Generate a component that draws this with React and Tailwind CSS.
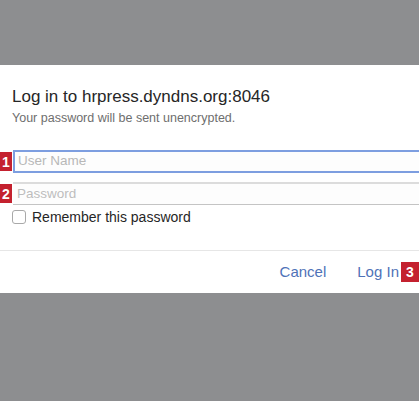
import React from "react";

function Badge({ n }) {
  return (
    <span className="flex h-[19px] w-[12px] shrink-0 items-center justify-center bg-[#c4212f] text-[14px] font-bold leading-none text-white">
      {n}
    </span>
  );
}

export default function App() {
  return (
    <div
      className="h-[401px] w-[419px] overflow-hidden bg-[#8d8e90] pt-[65px]"
      style={{ fontFamily: '"Liberation Sans", Arial, sans-serif' }}
    >
      <div className="flex h-[228px] flex-col bg-white">
        {/* header text */}
        <div className="pl-[12px] pt-[23px]">
          <h1 className="text-[17px] leading-[18px] text-[#262626]">
            Log in to hrpress.dyndns.org:8046
          </h1>
          <p className="mt-[5px] text-[12.5px] leading-[14px] text-[#6e6e6e]">
            Your password will be sent unencrypted.
          </p>
        </div>

        {/* fields */}
        <div className="mt-[25px] flex flex-col">
          <div className="flex items-center">
            <Badge n="1" />
            <div className="ml-[1px] flex h-[23px] flex-1 items-center border-y-2 border-l-2 border-[#7d9ee0] bg-[#fdfdfd] pl-[3px]">
              <span className="text-[13.5px] text-[#b8b8b8]">User Name</span>
            </div>
          </div>
          <div className="mt-[9px] flex items-center">
            <Badge n="2" />
            <div className="ml-[1px] flex h-[23px] flex-1 items-center border-t-2 border-b border-t-[#dcdcdc] border-b-[#c4c4c4] bg-[#fdfdfd] pl-[4px]">
              <span className="text-[13.5px] text-[#bdbdbd]">Password</span>
            </div>
          </div>
          <label className="mt-[4px] flex h-[16px] items-center pl-[12px]">
            <span className="h-[14px] w-[14px] rounded-[3px] border border-[#a9a9a9] bg-white" />
            <span className="ml-[6px] text-[14px] text-[#262626]">
              Remember this password
            </span>
          </label>
        </div>

        {/* footer */}
        <div className="mt-[25px] border-t border-[#e6e6e6]" />
        <div className="flex flex-1 items-center justify-end">
          <span className="text-[15px] text-[#4f72b8]">Cancel</span>
          <span className="ml-[31px] text-[15px] text-[#4f72b8]">Log In</span>
          <span className="ml-[2px] flex h-[20px] w-[18px] items-center justify-center bg-[#c4212f] text-[14px] font-bold text-white">
            3
          </span>
        </div>
      </div>
    </div>
  );
}
